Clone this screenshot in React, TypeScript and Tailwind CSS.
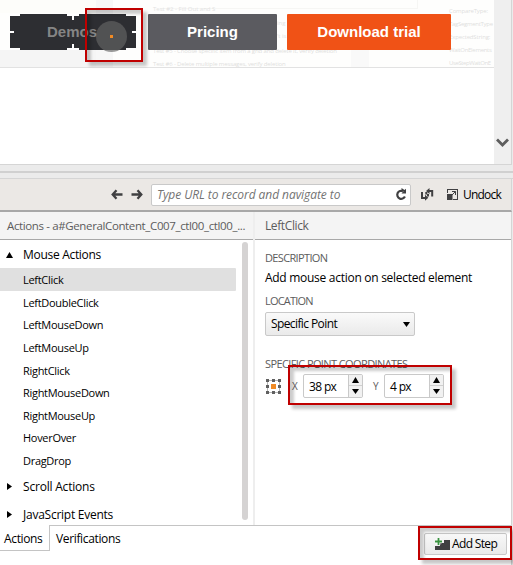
import React from "react";

function Highlight({ className }: { className: string }) {
  return (
    <div
      className={`pointer-events-none absolute z-20 border-2 border-[#c00000] shadow-[4px_4px_3px_rgba(0,0,0,0.22),inset_4px_4px_3px_rgba(0,0,0,0.2)] ${className}`}
    />
  );
}

function Arrow({ flip = false }: { flip?: boolean }) {
  return (
    <svg width="12" height="11" viewBox="0 0 12 11" className={flip ? "-scale-x-100" : ""}>
      <path d="M5.5 1.300 1.700 5.500l3.800 4.200M2 5.500h9.500" fill="none" stroke="#404042" strokeWidth="2.3" />
    </svg>
  );
}

function Triangle({ dir }: { dir: "up" | "down" | "right" }) {
  const d = { up: "M0 6 3.5 0 7 6z", down: "M0 1h7L3.5 6z", right: "M1 0 6 3.5 1 7z" }[dir];
  return (
    <svg width="7" height="7" viewBox="0 0 7 7" className="shrink-0">
      <path d={d} fill="#000" />
    </svg>
  );
}

function Spinner({ value }: { value: string }) {
  return (
    <div className="flex h-6 w-[60px] overflow-hidden rounded-[2px] border border-[#c9c9c9] bg-white">
      <span className="w-[44px] pl-[5px] text-[12px] leading-[24px] tracking-[-0.65px]">{value}</span>
      <div className="flex grow flex-col border-l border-[#c9c9c9] bg-[#f1f1f1]">
        <div className="flex h-[11px] items-center justify-center border-b border-[#cfcfcf]">
          <Triangle dir="up" />
        </div>
        <div className="flex h-[11px] items-center justify-center">
          <Triangle dir="down" />
        </div>
      </div>
    </div>
  );
}

const mouseActions = [
  "LeftClick",
  "LeftDoubleClick",
  "LeftMouseDown",
  "LeftMouseUp",
  "RightClick",
  "RightMouseDown",
  "RightMouseUp",
  "HoverOver",
  "DragDrop",
];

function Browser() {
  return (
    <div className="flex h-[165px] w-[512px] border-r border-b border-[#d5d5d5] bg-white">
      <div className="relative h-[164px] w-[494px]">
        <div className="relative h-[68px] border-b border-[#e2e2e2] bg-[#fefefd]">
          <div className="absolute top-0 left-0 h-[13px] w-[96px] bg-[#fdfdfa]" />
          <div className="absolute top-[50px] left-0 h-[17px] w-[96px] bg-[#f5f5f5]" />
          <div className="absolute top-0 left-[96px] h-[67px] w-[17px] bg-[#f7f7f7]" />
          <div className="absolute top-0 left-[160px] h-[9px] w-[258px] border-r border-b border-[#f6f6f4]" />
          <div className="absolute top-[50px] left-[351px] h-[17px] w-[18px] bg-[#f9f9f9]" />
          <div className="absolute top-[3px] left-[153px] text-[6px] leading-[13px] whitespace-nowrap text-[#e3e3e3]">
            Test #2 - Fill Out and S
          </div>
          <div className="absolute top-[17px] left-[277px] text-[6px] leading-[13px] whitespace-nowrap text-[#e3e3e3]">
            <p>ing</p>
            <p>&apos;t is</p>
          </div>
          <div className="absolute top-[45px] left-[153px] text-[6px] leading-[13px] tracking-[-0.15px] whitespace-nowrap text-[#dedede]">
            <p>Test #5 - Choose specific item from a grid and delete it, verify deletion</p>
            <p>Test #6 - Delete multiple messages, verify deletion</p>
          </div>
          <div className="absolute top-[5px] left-[449px] text-[6px] leading-[13px] tracking-[-0.15px] whitespace-nowrap text-[#dedede]">
            <p>CompareType:</p>
            <p className="tracking-[-0.3px]">TagSegmentType</p>
            <p>ExpectedString:</p>
            <p className="tracking-[-0.3px]">WaitOnElements</p>
            <p className="tracking-[-0.4px]">UseStepWaitOnE</p>
          </div>
        </div>
        <div className="absolute top-[14px] left-[10px] flex gap-[12px] font-['Liberation_Sans',sans-serif] text-[15px] leading-[35px] font-bold text-white">
          <div className="relative h-[36px] w-[126px] bg-[#2d2e32] pl-[37px] text-[#858585]">
            Demos
            <i className="absolute top-0 left-0 h-[2px] w-[10px] bg-white" />
            <i className="absolute bottom-0 left-0 h-[2px] w-[10px] bg-white" />
            <i className="absolute top-0 left-[57px] h-[2px] w-[12px] bg-white" />
            <i className="absolute bottom-0 left-[57px] h-[2px] w-[12px] bg-white" />
            <i className="absolute top-0 left-[62px] h-[6px] w-[2px] bg-white" />
            <i className="absolute bottom-0 left-[62px] h-[6px] w-[2px] bg-white" />
            <i className="absolute top-[17px] left-0 h-[2px] w-[4px] bg-white" />
            <i className="absolute top-[17px] right-0 h-[2px] w-[4px] bg-white" />
            <i className="absolute top-0 right-0 h-[2px] w-[10px] bg-white" />
            <i className="absolute right-0 bottom-0 h-[2px] w-[10px] bg-white" />
            <i className="absolute top-[7px] left-[86px] h-[31px] w-[31px] rounded-full bg-[#666]/65" />
            <i className="absolute top-[21px] left-[100px] h-[3px] w-[3px] bg-[#f08a24]" />
          </div>
          <div className="h-[36px] w-[129px] rounded-[1px] bg-[#5b5b60] text-center">Pricing</div>
          <div className="-ml-[2px] h-[36px] w-[164px] rounded-[1px] bg-[#f05216] text-center">Download trial</div>
        </div>
      </div>
      <div className="flex w-[17px] items-end justify-center bg-[#efefef] pb-[16px]">
        <svg width="13" height="10" viewBox="0 0 13 10">
          <path d="M1 1.5 6.5 7 12 1.5" fill="none" stroke="#5d5d5d" strokeWidth="2.8" />
        </svg>
      </div>
    </div>
  );
}

function Toolbar() {
  return (
    <div className="flex h-[33px] w-[512px] items-center border-r border-b-2 border-r-[#d5d5d5] border-b-[#a8a8a8] bg-[#ebe8e5]">
      <div className="ml-[111px] flex w-[40px] gap-[8px]">
        <Arrow />
        <Arrow flip />
      </div>
      <div className="flex h-[22px] w-[260px] items-center justify-between rounded-[2px] border border-[#c9c9c9] bg-white pr-[3px] pl-[5px]">
        <span className="text-[12px] leading-[20px] tracking-[-0.07px] whitespace-nowrap text-[#737373] italic">
          Type URL to record and navigate to
        </span>
        <svg width="12" height="13" viewBox="0 0 12 13">
          <path d="M8 3.200A4 4 0 1 0 9.900 8.500" fill="none" stroke="#404042" strokeWidth="2.2" />
          <path d="M6.500 0v2.200L8.500 3.300 6.500 5.600H11V.800L9.500 2z" fill="#404042" />
        </svg>
      </div>
      <svg width="14" height="13" viewBox="0 0 14 13" className="ml-[9px]">
        <path d="M2 4v6h4M12.200 8.500V3H9" fill="none" stroke="#404042" strokeWidth="2" />
        <path d="M5 6.700v6L8.300 9.800zM9.500 0v6L6 3zM7 6h2v2.500H7zM5.300 4h2v2.500h-2z" fill="#404042" />
      </svg>
      <svg width="11" height="11" viewBox="0 0 11 11" className="ml-[13px]">
        <path d="M0 0h11v11H6v-1h4V1H1v3H0z" fill="#404042" />
        <path d="M0 5h5.500v6H0z" fill="#404042" />
        <path d="M5 2.500h3.500V6M8.500 2.500 5 6" fill="none" stroke="#404042" />
      </svg>
      <span className="ml-[5px] text-[12px] tracking-[-0.8px]">Undock</span>
    </div>
  );
}

function Group({ label, className }: { label: string; className: string }) {
  return (
    <div className="flex h-[28px] items-center pl-[6px]">
      <Triangle dir="right" />
      <span className={`ml-[10px] text-[12px] ${className}`}>{label}</span>
    </div>
  );
}

function ActionsPanel() {
  return (
    <div className="w-[255px] shrink-0 border-r-2 border-[#eee]">
      <div className="h-[28px] border-b border-[#a8a8a8] bg-[#f4f4f4] pl-[7px] text-[11.5px] leading-[28px] font-medium tracking-[-0.37px] whitespace-nowrap text-[#5c5c5c]">
        Actions - a#GeneralContent_C007_ctl00_ctl00_...
      </div>
      <div className="flex h-[285px] justify-between overflow-hidden pr-[5px]">
        <div className="w-[236px]">
          <div className="flex h-[28px] items-center pt-[2px] pl-[6px]">
            <Triangle dir="up" />
            <span className="ml-[10px] text-[12px] tracking-[-0.3px]">Mouse Actions</span>
          </div>
          <ul className="text-[11px] tracking-[-0.3px]">
            {mouseActions.map((a, i) => (
              <li key={a} className={`h-[22.65px] pl-[23px] leading-[23px] ${i === 0 ? "rounded-r-[1px] bg-[#e0e0e0]" : ""}`}>
                {a}
              </li>
            ))}
          </ul>
          <div className="pt-[1px]">
            <Group label="Scroll Actions" className="tracking-[-0.2px]" />
            <Group label="JavaScript Events" className="tracking-[-0.25px]" />
          </div>
        </div>
        <div className="mt-[2px] h-[278px] w-[6px] rounded-full bg-[#d5d3d3]" />
      </div>
    </div>
  );
}

function Details() {
  return (
    <div className="grow">
      <div className="h-[28px] border-b border-[#a8a8a8] bg-[#f4f4f4] pl-[10px] text-[12px] leading-[28px] font-medium tracking-[-0.4px] text-[#5c5c5c]">
        LeftClick
      </div>
      <div className="pt-[10px] pl-[10px] text-[12px]">
        <div className="text-[11px] leading-[16px] tracking-[-0.65px] text-[#5c5c5c]">DESCRIPTION</div>
        <div className="mt-[2px] leading-[19px] tracking-[-0.28px] whitespace-nowrap">Add mouse action on selected element</div>
        <div className="mt-[6px] text-[11px] leading-[16px] tracking-[-0.8px] text-[#5c5c5c]">LOCATION</div>
        <div className="mt-[3px] flex h-[24px] w-[150px] items-center justify-between rounded-[2px] border border-[#c9c9c9] bg-gradient-to-b from-[#fafafa] to-[#eaeaea] pr-[4px] pl-[5px]">
          <span className="tracking-[-0.6px]">Specific Point</span>
          <Triangle dir="down" />
        </div>
        <div className="mt-[20px] text-[11px] leading-[16px] tracking-[-0.6px] text-[#5c5c5c]">SPECIFIC POINT COORDINATES</div>
        <div className="mt-[2px] flex items-center pl-px">
          <svg width="15" height="15" viewBox="0 0 15 15">
            <path d="M1 1h13v13H1zM2 2v11h11V2z" fill="#b5b5b5" fillRule="evenodd" />
            <path
              d="M0 0h3v3H0zM6 0h3v3H6zM12 0h3v3h-3zM0 6h3v3H0zM12 6h3v3h-3zM0 12h3v3H0zM6 12h3v3H6zM12 12h3v3h-3z"
              fill="#606060"
            />
            <path d="M5 5h5v5H5z" fill="#f08a24" />
          </svg>
          <span className="ml-[11px] w-[11px] pt-px text-[10px] text-[#5c5c5c]">X</span>
          <Spinner value="38 px" />
          <span className="ml-[10px] w-[11px] pt-px text-[10px] text-[#5c5c5c]">Y</span>
          <Spinner value="4 px" />
        </div>
      </div>
    </div>
  );
}

export default function App() {
  return (
    <div className="relative h-[565px] w-[513px] overflow-hidden bg-[#ebebeb] font-['Open_Sans','Noto_Sans',sans-serif] text-black">
      <Browser />
      <div className="h-[14px] border-b border-[#d5d5d5] pt-[6px]">
        <div className="h-[2px] bg-[#d0d0d0]" />
      </div>
      <Toolbar />
      <div className="flex h-[313px] w-[512px] border-r border-[#d5d5d5] bg-white">
        <ActionsPanel />
        <Details />
      </div>
      <div className="flex h-[40px] w-[512px] border-r border-[#d5d5d5] bg-white text-[12px]">
        <div className="h-[26px] w-[50px] border-r border-b border-[#c4c4c4] pl-[4px] leading-[27px] tracking-[-0.35px]">
          Actions
        </div>
        <div className="flex grow justify-between border-t border-[#c4c4c4]">
          <span className="pl-[6px] leading-[26px] tracking-[-0.35px]">Verifications</span>
          <button className="mt-[7px] mr-[4px] flex h-[22px] w-[83px] items-center rounded-[2px] border border-[#c9c9c9] bg-gradient-to-b from-[#f8f8f8] to-[#eaeaea] pl-[10px]">
            <svg width="15" height="12" viewBox="0 0 15 12">
              <path d="M0 12V8h5V5h4V2h6v10z" fill="#404042" />
              <path d="M3.500 0v7M0 3.500h7" stroke="#fff" strokeWidth="3.500" />
              <path d="M3.500 0v7M0 3.500h7" stroke="#39913f" strokeWidth="1.800" />
            </svg>
            <span className="ml-[2px] tracking-[-0.65px] whitespace-nowrap">Add Step</span>
          </button>
        </div>
      </div>
      <Highlight className="top-[8px] left-[85px] h-[54px] w-[58px]" />
      <Highlight className="top-[365px] left-[288px] h-[40px] w-[164px]" />
      <Highlight className="top-[526px] left-[418px] h-[34px] w-[94px]" />
    </div>
  );
}
